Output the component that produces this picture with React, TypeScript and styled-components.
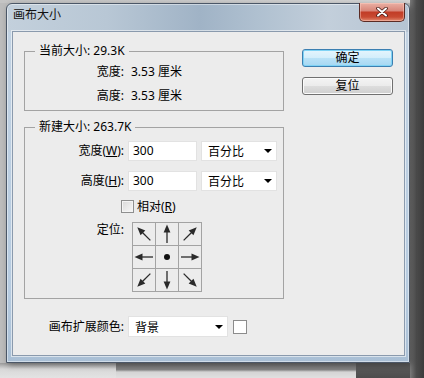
import React from 'react';
import styled, { createGlobalStyle } from 'styled-components';

const GlobalStyle = createGlobalStyle`
  html, body { margin: 0; padding: 0; }
  body {
    width: 424px; height: 378px; overflow: hidden;
    font-family: "Noto Sans", "Noto Sans CJK SC", sans-serif;
    font-size: 12px; color: #000;
  }
`;

const Desktop = styled.div`
  width: 424px;
  height: 378px;
  box-sizing: border-box;
  padding: 3px 0 0 6px;
  background-color: #bcbcbc;
  background-image:
    linear-gradient(to right, #7a7a7a 0%, #4c4c4c 45%, #3b3b3b 100%),
    linear-gradient(to bottom, #6f6f6f 0%, #858585 45%, #d4d4d4 60%, #e0e0e0 100%),
    linear-gradient(to bottom, #5e5e5e, #4d4d4d),
    linear-gradient(to bottom, #9a9a9a 0%, #d8d8d8 40%, #e3e3e3 100%),
    linear-gradient(to right, #c4c4c4, #d6d6d6);
  background-position: 410px 0, 116px 363px, 356px 363px, 0 363px, 0 0;
  background-size: 14px 378px, 240px 15px, 54px 15px, 116px 15px, 410px 3px;
  background-repeat: no-repeat;
`;

const Window = styled.div`
  width: 404px;
  height: 360px;
  box-sizing: border-box;
  border: 1px solid #4b5767;
  border-radius: 6px 6px 0 0;
  padding: 0 4px 6px 5px;
  display: flex;
  flex-direction: column;
  background:
    linear-gradient(to right, #c3d0dc 0%, #b8c7d5 25%, #a0b3c6 48%, #afc0d0 62%, #c3cfdb 80%, #b5c4d3 100%) top / 100% 28px no-repeat,
    linear-gradient(to bottom, #c3d3e3, #b6cbe0 80%, #a9bfd5);
  box-shadow: inset 0 0 0 1px rgba(255, 255, 255, 0.45), 2px 2px 6px rgba(0, 0, 0, 0.35);
`;

const TitleBar = styled.div`
  height: 27px;
  display: flex;
  align-items: flex-start;
  justify-content: space-between;
`;

const Title = styled.div`
  margin: 3px 0 0 1px;
  line-height: 16px;
  font-size: 12px;
  color: #111;
`;

const CloseButton = styled.div`
  margin-top: -1px;
  width: 46px;
  height: 19px;
  box-sizing: border-box;
  border: 1px solid #5b2b24;
  border-top: none;
  border-radius: 0 0 5px 5px;
  background: linear-gradient(to bottom, #eab0a4 0%, #d9877a 42%, #c23d27 52%, #c84a32 78%, #e28a70 100%);
  box-shadow: inset 0 0 0 1px rgba(255, 210, 200, 0.45);
  display: flex;
  align-items: center;
  justify-content: center;
`;

const Client = styled.div`
  flex: 1;
  background: #ececec;
  border: 1px solid #8a9aad;
  box-shadow: 0 0 0 1px rgba(255, 255, 255, 0.55);
  display: flex;
  padding: 11px 0 0 11px;
`;

const LeftColumn = styled.div`
  width: 260px;
  display: flex;
  flex-direction: column;
`;

const RightColumn = styled.div`
  margin-left: 18px;
  padding-top: 6px;
  display: flex;
  flex-direction: column;
  gap: 10px;
`;

const Group = styled.fieldset<{ $gap?: number }>`
  margin: ${(p) => p.$gap ?? 0}px 0 0 0;
  padding: ${(p) => (p.$gap ? '6px 0 6px 0' : '3px 0 4px 0')};
  border: 1px solid #a3a3a3;
  min-width: 0;
`;

const Legend = styled.legend`
  margin-left: 10px;
  padding: 0 4px 0 4px;
  line-height: 16px;
  font-size: 12px;
`;

const InfoGrid = styled.div`
  display: grid;
  grid-template-columns: 101px auto;
  column-gap: 5px;
  row-gap: 4px;
  line-height: 20px;
`;

const InfoLabel = styled.div`
  text-align: right;
  padding-right: 2px;
`;

const FieldRow = styled.div<{ $top?: number }>`
  display: flex;
  align-items: center;
  height: 20px;
  margin-top: ${(p) => p.$top ?? 0}px;
`;

const FieldLabel = styled.div<{ $w?: number }>`
  width: ${(p) => p.$w ?? 101}px;
  box-sizing: border-box;
  padding-right: 2px;
  text-align: right;
  flex: none;
  line-height: 16px;
`;

const TextBox = styled.div`
  margin-left: 2px;
  width: 69px;
  height: 20px;
  box-sizing: border-box;
  background: #fff;
  border: 1px solid #e2e2e2;
  padding-left: 4px;
  line-height: 18px;
`;

const Select = styled.div<{ $w: number; $ml: number; $h?: number }>`
  margin-left: ${(p) => p.$ml}px;
  width: ${(p) => p.$w}px;
  height: ${(p) => p.$h ?? 20}px;
  box-sizing: border-box;
  background: #fff;
  border: 1px solid #e2e2e2;
  padding: 0 4px 0 6px;
  display: flex;
  align-items: center;
  justify-content: space-between;
`;

const Caret = styled.span`
  width: 0;
  height: 0;
  border-left: 4px solid transparent;
  border-right: 4px solid transparent;
  border-top: 4px solid #000;
`;

const CheckRow = styled.div`
  margin-top: 9px;
  padding-left: 96px;
  height: 13px;
  display: flex;
  align-items: center;
  gap: 3px;
`;

const CheckBox = styled.span`
  width: 13px;
  height: 13px;
  box-sizing: border-box;
  border: 1px solid #8e8f8f;
  background: linear-gradient(135deg, #d9d9d9, #f8f8f8);
  box-shadow: inset 0 0 0 1px #f4f4f4;
`;

const CheckLabel = styled.span`
  line-height: 13px;
`;

const AnchorRow = styled.div`
  margin-top: 9px;
  display: flex;
  align-items: flex-start;
`;

const AnchorGrid = styled.div`
  margin-left: 6px;
  display: grid;
  grid-template-columns: repeat(3, 22px);
  grid-template-rows: repeat(3, 22px);
  gap: 1px;
  padding: 1px;
  background: #a3a3a3;
  width: max-content;
`;

const AnchorCell = styled.div`
  background: #ececec;
  display: flex;
  align-items: center;
  justify-content: center;
`;

const ExtRow = styled.div`
  margin-top: 17px;
  display: flex;
  align-items: center;
`;

const Swatch = styled.span`
  margin-left: 5px;
  width: 14px;
  height: 14px;
  box-sizing: border-box;
  border: 1px solid #8c8c8c;
  background: #fff;
`;

const DialogButton = styled.div<{ $primary?: boolean }>`
  width: 91px;
  height: 18px;
  box-sizing: border-box;
  border: 1px solid ${(p) => (p.$primary ? '#3c7fb1' : '#707070')};
  border-radius: 3px;
  background: ${(p) =>
    p.$primary
      ? 'linear-gradient(to bottom, #e5f5fd 0%, #d3eefb 50%, #b9e2f7 51%, #a6d7f2 100%)'
      : 'linear-gradient(to bottom, #f4f4f4 0%, #ebebeb 50%, #dddddd 51%, #cfcfcf 100%)'};
  box-shadow: ${(p) => (p.$primary ? 'inset 0 0 0 1px #7fd3f5' : 'inset 0 0 0 1px #fbfbfb')};
  display: flex;
  align-items: center;
  justify-content: center;
  line-height: 16px;
`;

const U = styled.span`
  text-decoration: underline;
`;

const Arrow: React.FC<{ angle: number }> = ({ angle }) => (
  <svg width="22" height="22" viewBox="0 0 22 22">
    <g transform={`rotate(${angle} 11 11)`}>
      <line x1="11" y1="20" x2="11" y2="7" stroke="#2a2a2a" strokeWidth="1.3" />
      <polygon points="11,1.5 7.6,9.5 14.4,9.5" fill="#2a2a2a" />
    </g>
  </svg>
);

const Dot = () => (
  <svg width="22" height="22" viewBox="0 0 22 22">
    <circle cx="11" cy="11" r="3" fill="#111" />
  </svg>
);

const CloseX = () => (
  <svg width="12" height="10" viewBox="0 0 12 10">
    <path d="M2 1.5 L10 8.5 M10 1.5 L2 8.5" stroke="#4a1c16" strokeWidth="3.6" strokeLinecap="round" />
    <path d="M2 1.5 L10 8.5 M10 1.5 L2 8.5" stroke="#ffffff" strokeWidth="2" strokeLinecap="round" />
  </svg>
);

const anchors: (number | null)[] = [-45, 0, 45, -90, null, 90, -135, 180, 135];

export default function App() {
  return (
    <>
      <GlobalStyle />
      <Desktop>
        <Window>
          <TitleBar>
            <Title>画布大小</Title>
            <CloseButton>
              <CloseX />
            </CloseButton>
          </TitleBar>
          <Client>
            <LeftColumn>
              <Group>
                <Legend>当前大小: 29.3K</Legend>
                <InfoGrid>
                  <InfoLabel>宽度:</InfoLabel>
                  <div>3.53 厘米</div>
                  <InfoLabel>高度:</InfoLabel>
                  <div>3.53 厘米</div>
                </InfoGrid>
              </Group>
              <Group $gap={8}>
                <Legend>新建大小: 263.7K</Legend>
                <FieldRow>
                  <FieldLabel>
                    宽度(<U>W</U>):
                  </FieldLabel>
                  <TextBox>300</TextBox>
                  <Select $w={76} $ml={4}>
                    百分比
                    <Caret />
                  </Select>
                </FieldRow>
                <FieldRow $top={10}>
                  <FieldLabel>
                    高度(<U>H</U>):
                  </FieldLabel>
                  <TextBox>300</TextBox>
                  <Select $w={76} $ml={4}>
                    百分比
                    <Caret />
                  </Select>
                </FieldRow>
                <CheckRow>
                  <CheckBox />
                  <CheckLabel>
                    相对(<U>R</U>)
                  </CheckLabel>
                </CheckRow>
                <AnchorRow>
                  <FieldLabel>定位:</FieldLabel>
                  <AnchorGrid>
                    {anchors.map((a, i) => (
                      <AnchorCell key={i}>{a === null ? <Dot /> : <Arrow angle={a} />}</AnchorCell>
                    ))}
                  </AnchorGrid>
                </AnchorRow>
              </Group>
              <ExtRow>
                <FieldLabel $w={102}>画布扩展颜色:</FieldLabel>
                <Select $w={100} $ml={2} $h={21}>
                  背景
                  <Caret />
                </Select>
                <Swatch />
              </ExtRow>
            </LeftColumn>
            <RightColumn>
              <DialogButton $primary>确定</DialogButton>
              <DialogButton>复位</DialogButton>
            </RightColumn>
          </Client>
        </Window>
      </Desktop>
    </>
  );
}
